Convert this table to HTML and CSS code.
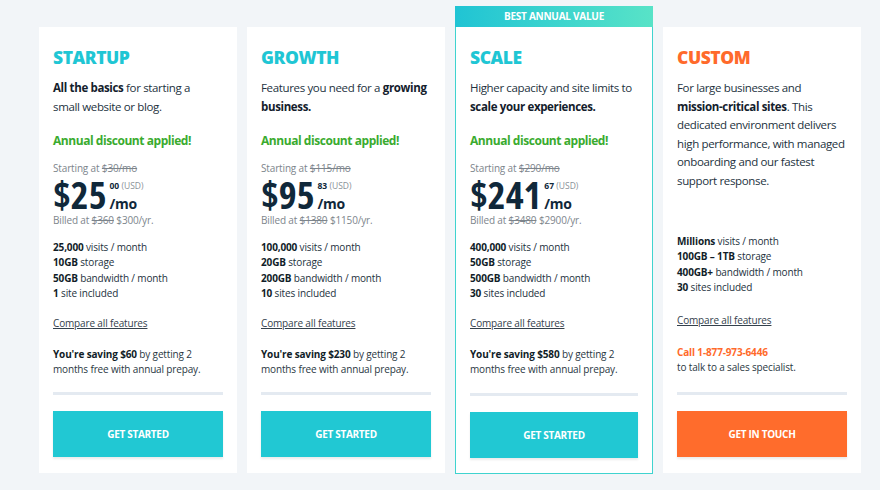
FILE: index.html
```html
<!DOCTYPE html>
<html>
<head>
<meta charset="utf-8">
<link rel="stylesheet" href="styles.css">
</head>
<body>
<div class="plans">
  <div class="card">
    <h2 class="title teal">STARTUP</h2>
    <p class="desc"><b>All the basics</b> for starting a<br>small website or blog.</p>
    <p class="discount">Annual discount applied!</p>
    <p class="starting">Starting at <s>$30/mo</s></p>
    <div class="price"><span class="amount">$25</span><span class="side"><span class="cents"><b>00</b> (USD)</span><span class="per">/mo</span></span></div>
    <p class="billed">Billed at <s>$360</s> $300/yr.</p>
    <ul class="features">
      <li><b>25,000</b> visits / month</li>
      <li><b>10GB</b> storage</li>
      <li><b>50GB</b> bandwidth / month</li>
      <li><b>1</b> site included</li>
    </ul>
    <a class="compare">Compare all features</a>
    <p class="saving"><b>You're saving $60</b> by getting 2 months free with annual prepay.</p>
    <div class="foot">
      <div class="sep"></div>
      <a class="btn teal-bg">GET STARTED</a>
    </div>
  </div>

  <div class="card">
    <h2 class="title teal">GROWTH</h2>
    <p class="desc">Features you need for a <b>growing business.</b></p>
    <p class="discount">Annual discount applied!</p>
    <p class="starting">Starting at <s>$115/mo</s></p>
    <div class="price"><span class="amount">$95</span><span class="side"><span class="cents"><b>83</b> (USD)</span><span class="per">/mo</span></span></div>
    <p class="billed">Billed at <s>$1380</s> $1150/yr.</p>
    <ul class="features">
      <li><b>100,000</b> visits / month</li>
      <li><b>20GB</b> storage</li>
      <li><b>200GB</b> bandwidth / month</li>
      <li><b>10</b> sites included</li>
    </ul>
    <a class="compare">Compare all features</a>
    <p class="saving"><b>You're saving $230</b> by getting 2 months free with annual prepay.</p>
    <div class="foot">
      <div class="sep"></div>
      <a class="btn teal-bg">GET STARTED</a>
    </div>
  </div>

  <div class="card featured">
    <div class="ribbon">BEST ANNUAL VALUE</div>
    <h2 class="title teal">SCALE</h2>
    <p class="desc">Higher capacity and site limits to <b>scale your experiences.</b></p>
    <p class="discount">Annual discount applied!</p>
    <p class="starting">Starting at <s>$290/mo</s></p>
    <div class="price"><span class="amount">$241</span><span class="side"><span class="cents"><b>67</b> (USD)</span><span class="per">/mo</span></span></div>
    <p class="billed">Billed at <s>$3480</s> $2900/yr.</p>
    <ul class="features">
      <li><b>400,000</b> visits / month</li>
      <li><b>50GB</b> storage</li>
      <li><b>500GB</b> bandwidth / month</li>
      <li><b>30</b> sites included</li>
    </ul>
    <a class="compare">Compare all features</a>
    <p class="saving"><b>You're saving $580</b> by getting 2 months free with annual prepay.</p>
    <div class="foot">
      <div class="sep"></div>
      <a class="btn teal-bg">GET STARTED</a>
    </div>
  </div>

  <div class="card custom">
    <h2 class="title orange">CUSTOM</h2>
    <p class="desc">For large businesses and <b>mission-critical sites</b>. This dedicated environment delivers high performance, with managed onboarding and our fastest support response.</p>
    <ul class="features">
      <li><b>Millions</b> visits / month</li>
      <li><b>100GB – 1TB</b> storage</li>
      <li><b>400GB+</b> bandwidth / month</li>
      <li><b>30</b> sites included</li>
    </ul>
    <a class="compare">Compare all features</a>
    <p class="saving"><b class="call">Call 1-877-973-6446</b><br>to talk to a sales specialist.</p>
    <div class="foot">
      <div class="sep"></div>
      <a class="btn orange-bg">GET IN TOUCH</a>
    </div>
  </div>
</div>
</body>
</html>
```

FILE: styles.css
```css
* { box-sizing: border-box; }
html, body {
  margin: 0;
  padding: 0;
  background: #f2f5f8;
  font-family: "Open Sans", "Liberation Sans", sans-serif;
  color: #1d2a36;
}
.plans {
  display: grid;
  grid-template-columns: repeat(4, 198px);
  column-gap: 10px;
  padding: 27px 0 0 39px;
  align-items: stretch;
}
.card {
  position: relative;
  background: #fff;
  height: 446px;
  padding: 17px 14px 16px;
  display: flex;
  flex-direction: column;
}
.card.featured {
  border: 1px solid #3fd3cf;
  border-top: none;
  padding: 17px 14px 15px 14px;
  height: 447px;
}
.ribbon {
  position: absolute;
  left: -1px;
  right: -1px;
  top: -21px;
  height: 21px;
  background: linear-gradient(90deg, #20c4d4, #58e3c7);
  color: #fff;
  font-size: 10px;
  letter-spacing: -0.25px;
  font-weight: 700;
  text-align: center;
  line-height: 21px;
}
.title {
  margin: 0;
  font-size: 17.5px;
  letter-spacing: -0.45px;
  font-weight: 800;
  line-height: 26px;
}
.teal { color: #1fc6d4; }
.orange { color: #ff6a2b; }
.desc {
  margin: 9px 0 0;
  font-size: 11.5px;
  letter-spacing: -0.35px;
  line-height: 18.5px;
  color: #233240;
}
.desc b { font-weight: 700; color: #13202c; }
.discount {
  margin: 16px 0 0;
  color: #3aab2f;
  font-weight: 700;
  font-size: 12px;
  letter-spacing: -0.45px;
  line-height: 18px;
}
.starting, .billed {
  margin: 0;
  font-size: 10px;
  letter-spacing: -0.15px;
  color: #7d858c;
  line-height: 15px;
}
.starting { margin-top: 11px; }
.price {
  display: flex;
  align-items: flex-start;
  color: #10283a;
  height: 37px;
}
.amount {
  font-size: 38px;
  font-stretch: 87.5%;
  font-weight: 700;
  line-height: 40px;
  margin-top: -2px;
}
.side {
  display: flex;
  flex-direction: column;
  margin-left: 3px;
}
.cents {
  font-size: 8.5px;
  color: #8a9198;
  line-height: 10px;
  margin-top: 5px;
}
.cents b { color: #10283a; }
.per {
  font-size: 14px;
  letter-spacing: -0.3px;
  font-weight: 700;
  line-height: 16px;
  margin-top: 5px;
}
.features {
  list-style: none;
  margin: 12px 0 0;
  padding: 0;
  font-size: 10px;
  letter-spacing: -0.15px;
  line-height: 15.3px;
  color: #24313d;
}
.features b { font-weight: 700; color: #111d28; }
.compare {
  margin-top: 15px;
  font-size: 10px;
  letter-spacing: -0.15px;
  line-height: 15px;
  color: #34414c;
  text-decoration: underline;
  align-self: flex-start;
}
.saving {
  margin: 16px 0 0;
  font-size: 10px;
  letter-spacing: -0.15px;
  line-height: 15px;
  color: #2a3743;
}
.saving b { color: #111d28; }
.saving b.call { color: #ff6a2b; }
.custom .features { margin-top: 44px; }
.custom .compare { margin-top: 18px; }
.custom .saving { margin-top: 17px; }
.foot {
  margin-top: auto;
}
.sep {
  height: 3px;
  background: #e4eaf1;
}
.btn {
  display: block;
  margin-top: 16px;
  height: 46px;
  line-height: 46px;
  text-align: center;
  color: #fff;
  font-size: 10px;
  letter-spacing: -0.3px;
  font-weight: 700;
  box-shadow: 0 2px 2px rgba(0, 0, 0, 0.08);
}
.teal-bg { background: #21c8d3; }
.orange-bg { background: #ff6c2c; }
```
